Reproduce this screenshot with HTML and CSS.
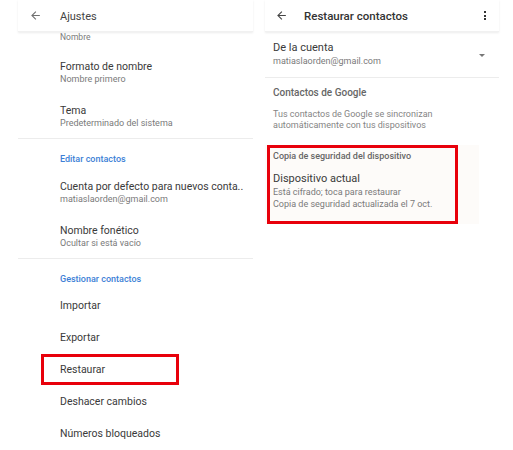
FILE: index.html
```html
<!DOCTYPE html>
<html lang="es">
<head>
    <meta charset="utf-8">
    <title>Ajustes - Restaurar contactos</title>
    <link rel="stylesheet" href="styles.css">
</head>
<body>
<div class="screens">
    <div class="panel left">
        <div class="topbar">
            <svg class="back" viewBox="0 0 24 24"><path d="M20 11H7.83l5.59-5.59L12 4l-8 8 8 8 1.41-1.41L7.83 13H20v-2z"/></svg>
            <span class="title">Ajustes</span>
        </div>
        <div class="tail">Nombre</div>
        <div class="item2">
            <div class="primary">Formato de nombre</div>
            <div class="secondary">Nombre primero</div>
        </div>
        <div class="item2">
            <div class="primary">Tema</div>
            <div class="secondary">Predeterminado del sistema</div>
        </div>
        <div class="divider"></div>
        <div class="section">Editar contactos</div>
        <div class="item2">
            <div class="primary">Cuenta por defecto para nuevos conta..</div>
            <div class="secondary">matiaslaorden@gmail.com</div>
        </div>
        <div class="item2">
            <div class="primary">Nombre fonético</div>
            <div class="secondary">Ocultar si está vacío</div>
        </div>
        <div class="divider"></div>
        <div class="section">Gestionar contactos</div>
        <div class="item1">Importar</div>
        <div class="item1">Exportar</div>
        <div class="item1 marked">Restaurar</div>
        <div class="item1">Deshacer cambios</div>
        <div class="item1">Números bloqueados</div>
    </div>

    <div class="panel right">
        <div class="topbar">
            <svg class="back dark" viewBox="0 0 24 24"><path d="M20 11H7.83l5.59-5.59L12 4l-8 8 8 8 1.41-1.41L7.83 13H20v-2z"/></svg>
            <span class="title strong">Restaurar contactos</span>
            <span class="kebab"><i></i><i></i><i></i></span>
        </div>
        <div class="account">
            <div>
                <div class="primary">De la cuenta</div>
                <div class="secondary">matiaslaorden@gmail.com</div>
            </div>
            <span class="caret"></span>
        </div>
        <div class="divider"></div>
        <div class="subhead">Contactos de Google</div>
        <div class="note">Tus contactos de Google se sincronizan<br>automáticamente con tus dispositivos</div>
        <div class="backup">
            <div class="backup-box">
                <div class="subhead small">Copia de seguridad del dispositivo</div>
                <div class="primary big">Dispositivo actual</div>
                <div class="secondary">Está cifrado; toca para restaurar</div>
                <div class="secondary">Copia de seguridad actualizada el 7 oct.</div>
            </div>
        </div>
    </div>
</div>
</body>
</html>
```

FILE: styles.css
```css
body {
    margin: 0;
    background-color: white;
    font-family: Roboto, "Noto Sans", sans-serif;
    color: #3a3a3a;
}

.screens {
    display: flex;
    padding-left: 18px;
    gap: 12px;
}

.panel {
    width: 235px;
}

.panel.right {
    width: 234px;
}

.topbar {
    height: 32px;
    display: flex;
    align-items: center;
    box-shadow: 0 1px 2px rgba(0, 0, 0, 0.08);
    border-bottom: 1px solid #f1f1f1;
    box-sizing: border-box;
}

.back {
    width: 13px;
    height: 13px;
    fill: #707070;
    margin-left: 11px;
}

.back.dark {
    fill: #444;
    margin-left: 10px;
}

.title {
    font-size: 11px;
    color: #444;
    margin-left: 18px;
    margin-top: 1px;
}

.title.strong {
    font-size: 11.5px;
    font-weight: 500;
    color: #333;
    margin-left: 16px;
}

.kebab {
    margin-left: auto;
    margin-right: 13px;
    display: flex;
    flex-direction: column;
    gap: 1.5px;
}

.kebab i {
    width: 2px;
    height: 2px;
    background: #333;
}

.left .tail {
    font-size: 8.5px;
    color: #7a7a7a;
    line-height: 10px;
    padding: 0 0 8px 42px;
}

.item2 {
    padding: 10px 0 8px 42px;
}

.primary {
    font-size: 10.5px;
    line-height: 13px;
    color: #3a3a3a;
}

.secondary {
    font-size: 9px;
    line-height: 13px;
    color: #7a7a7a;
}

.divider {
    height: 1px;
    background: #ececec;
}

.section {
    font-size: 9px;
    font-weight: 500;
    line-height: 12px;
    color: #3d7fd6;
    padding: 14px 0 5px 42px;
}

.item1 {
    height: 32px;
    line-height: 32px;
    font-size: 10.5px;
    padding-left: 42px;
    box-sizing: border-box;
}

.item1.marked {
    margin-left: 23px;
    width: 138px;
    height: 31px;
    line-height: 25px;
    padding-left: 16px;
    border: 3px solid #e8000b;
    margin-bottom: 1px;
}

.account {
    display: flex;
    align-items: center;
    padding: 9px 0 9px 8px;
}

.account .primary {
    font-size: 11px;
    line-height: 14px;
}

.caret {
    margin-left: auto;
    margin-right: 14px;
    margin-top: 2px;
    border-left: 3px solid transparent;
    border-right: 3px solid transparent;
    border-top: 3px solid #777;
}

.subhead {
    font-size: 10px;
    font-weight: 500;
    color: #666;
    line-height: 10px;
    padding: 10px 0 0 8px;
}

.note {
    font-size: 9px;
    line-height: 11px;
    color: #858585;
    padding: 11px 0 0 8px;
}

.backup {
    margin-top: 14px;
    background: #fdfbf9;
    width: 214px;
}

.backup-box {
    width: 191px;
    margin-left: 2px;
    border: 3px solid #e8000b;
    box-sizing: border-box;
    padding: 3px 0 11px 3px;
}

.backup-box .subhead {
    font-size: 9px;
    padding: 0;
    line-height: 11px;
}

.backup-box .primary.big {
    font-size: 11px;
    line-height: 14px;
    margin-top: 10px;
}

.backup-box .secondary {
    line-height: 12px;
}
```
